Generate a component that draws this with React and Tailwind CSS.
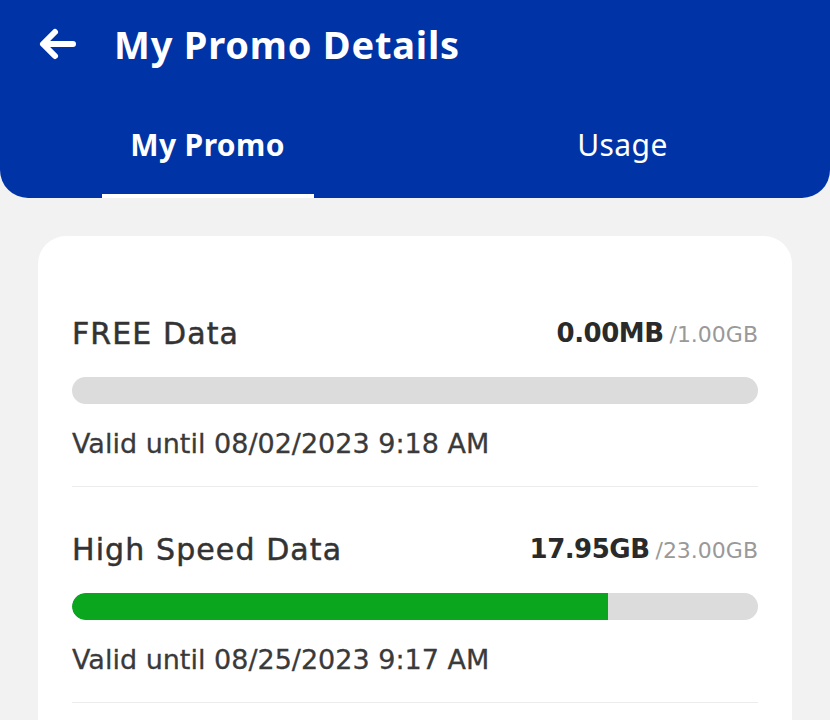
import { useState } from 'react'

const PROMOS = [
  { name: 'FREE Data', used: '0.00MB', total: '1.00GB', pct: 0, valid: 'Valid until 08/02/2023 9:18 AM' },
  { name: 'High Speed Data', used: '17.95GB', total: '23.00GB', pct: 78.1, valid: 'Valid until 08/25/2023 9:17 AM' },
]

export default function App() {
  const [tab, setTab] = useState('promo')

  return (
    <div className="min-h-[720px] bg-[#f2f2f2] font-['Noto_Sans',sans-serif]">
      {/* Header */}
      <div className="bg-[#0034a6] rounded-b-[28px] h-[198px] flex flex-col">
        <div className="flex items-center h-[88px] pl-[38px] gap-[36px]">
          <svg width="40" height="34" viewBox="0 0 40 34" fill="none" stroke="white" strokeWidth="6" strokeLinecap="round" strokeLinejoin="round">
            <path d="M35 17H6" />
            <path d="M17 5L5 17l12 12" />
          </svg>
          <h1 className="text-white text-[38px] font-bold tracking-[0.8px] leading-none">My Promo Details</h1>
        </div>
        <div className="flex flex-1">
          {[
            ['promo', 'My Promo'],
            ['usage', 'Usage'],
          ].map(([k, label]) => (
            <button
              key={k}
              onClick={() => setTab(k)}
              className="flex-1 flex flex-col items-center justify-end"
            >
              <span className={`text-white text-[30px] leading-none pb-[34px] tracking-[0.4px] ${tab === k ? 'font-bold' : 'font-normal'}`}>
                {label}
              </span>
              <span className={`h-[4px] w-[212px] ${tab === k ? 'bg-white' : 'bg-transparent'}`} />
            </button>
          ))}
        </div>
      </div>

      {/* Card */}
      <div className="mx-[38px] mt-[38px] bg-white rounded-[28px] px-[34px] pt-[75px] pb-[40px] font-['DejaVu_Sans',sans-serif]">
        {PROMOS.map((p) => (
          <div key={p.name} className="border-b border-[#ececec] pb-[24px] mb-[40px]">
            <div className="flex items-center justify-between h-[44px]">
              <span className="text-[30px] text-[#333] tracking-[1.1px] [-webkit-text-stroke:0.5px_#333]">{p.name}</span>
              <span className="flex items-baseline">
                <span className="text-[26px] text-[#2a2a2a] font-bold tracking-[-0.5px]">{p.used}</span>
                <span className="text-[22px] text-[#999] ml-[6px]">/{p.total}</span>
              </span>
            </div>
            <div className="mt-[22px] h-[27px] rounded-full bg-[#dcdcdc] overflow-hidden">
              <div className="h-full bg-[#0aa61e] rounded-l-full" style={{ width: `${p.pct}%` }} />
            </div>
            <p className="mt-[22px] text-[27px] text-[#3a3a3a] leading-[36px] [-webkit-text-stroke:0.3px_#3a3a3a]">{p.valid}</p>
          </div>
        ))}
      </div>
    </div>
  )
}
